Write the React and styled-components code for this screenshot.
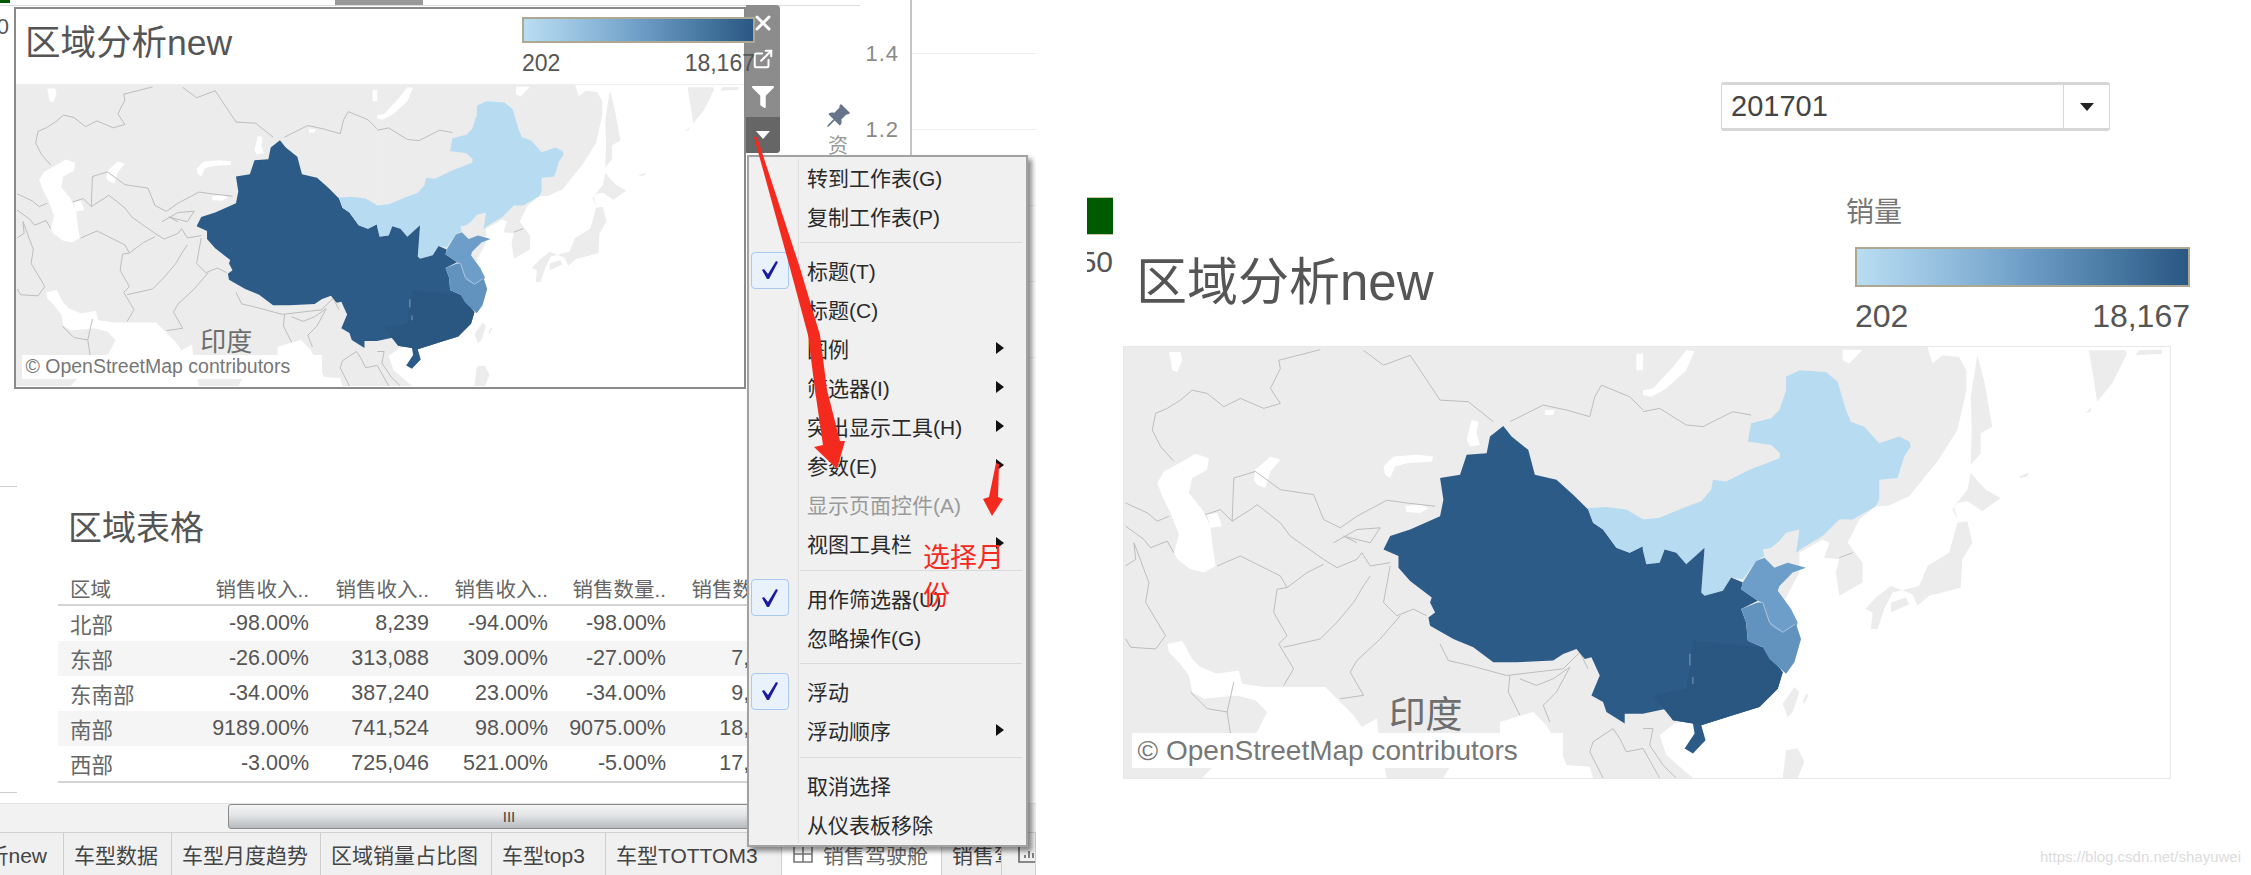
import React from "react";
import styled, { createGlobalStyle } from "styled-components";
import { X, ExternalLink } from "lucide-react";
import { FaFilter } from "react-icons/fa";
import { BsPinAngleFill } from "react-icons/bs";

const FONT = `"Liberation Sans", "Noto Sans CJK SC", sans-serif`;

const GlobalStyle = createGlobalStyle`
  html, body {
    margin: 0;
    padding: 0;
    background: white;
    font-family: ${FONT};
  }
  * {
    box-sizing: border-box;
  }
`;

const Page = styled.div`
  display: flex;
  width: 2251px;
  height: 875px;
  overflow: hidden;
  background: white;
`;

/* ---------- left screenshot ---------- */

const LeftShot = styled.div`
  position: relative;
  display: flex;
  flex-direction: column;
  width: 1036px;
  height: 875px;
  flex: none;
  overflow: hidden;
`;

const Canvas = styled.div`
  display: flex;
  height: 803px;
  flex: none;
`;

const Dashboard = styled.div`
  display: flex;
  flex-direction: column;
  width: 860px;
  flex: none;
`;

const TopStrip = styled.div`
  display: flex;
  height: 6px;
  flex: none;
  border-bottom: 1px solid #dcdcdc;
`;

const GreenStub = styled.div`
  width: 10px;
  height: 3px;
  background: #005a00;
`;

const GrayStub = styled.div`
  width: 88px;
  height: 5px;
  margin-left: 325px;
  background: #999;
`;

const CutValue = styled.div`
  width: 9px;
  margin-top: 10px;
  height: 22px;
  line-height: 22px;
  font-size: 22px;
  color: #555;
  overflow: hidden;
  direction: rtl;
`;

const StubRule = styled.div`
  width: 17px;
  height: 1px;
  margin-top: ${props => props.$top}px;
  background: #ccc;
  flex: none;
`;

const TableTitle = styled.h2`
  margin: 24px 0 0 68px;
  font-size: 34px;
  line-height: 34px;
  font-weight: 400;
  color: #555;
`;

const Table = styled.div`
  width: 727px;
  margin: 26px 0 0 58px;
  border-bottom: 2px solid #d4d4d4;
`;

const Row = styled.div`
  display: grid;
  grid-template-columns: 130px 121px 120px 119px 118px 119px;
  align-items: center;
  height: 35px;
  font-size: 21.5px;
  color: #555;
  background: ${props => (props.$striped ? "#f5f5f5" : "white")};
`;

const HeadRow = styled(Row)`
  border-bottom: 2px solid #d4d4d4;
  font-size: 20.5px;
  color: #666;
`;

const RegionCell = styled.div`
  padding-left: 12px;
  color: #666;
`;

const NumCell = styled.div`
  text-align: right;
  white-space: nowrap;
`;

const ChartPane = styled.div`
  display: flex;
  flex: 1;
  height: 440px;
`;

const AxisGutter = styled.div`
  width: 50px;
  flex: none;
  display: flex;
  flex-direction: column;
  align-items: flex-end;
  padding: 39px 11px 0 0;
  color: #8a8a8a;
  font-size: 22px;
  letter-spacing: 1px;
`;

const Tick = styled.div`
  height: 76px;
  line-height: 30px;
  flex: none;
`;

const Plot = styled.div`
  flex: 1;
  border-left: 2px solid #c4c4c4;
  background-image: repeating-linear-gradient(
    to bottom,
    transparent 0,
    transparent 75px,
    #efefef 75px,
    #efefef 76px
  );
  background-position: 0 -22px;
`;

const ScrollStrip = styled.div`
  display: flex;
  align-items: flex-start;
  height: 29px;
  flex: none;
  padding-left: 228px;
  background: #f2f2f2;
  border-top: 1px solid #e4e4e4;
`;

const ScrollThumb = styled.div`
  display: flex;
  align-items: center;
  justify-content: center;
  width: 740px;
  height: 25px;
  padding-right: 178px;
  border: 1px solid #8a8a8a;
  border-radius: 3px;
  background: linear-gradient(to bottom, #f4f4f4 0%, #e2e4e6 45%, #b6babe 100%);
  color: #444;
  font-size: 15px;
  letter-spacing: 0;
`;

const TabBar = styled.div`
  display: flex;
  height: 43px;
  flex: none;
  background: #f0f0f0;
  border-top: 1px solid #d0d0d0;
  overflow: hidden;
`;

const Tab = styled.div`
  display: flex;
  align-items: center;
  justify-content: ${props => (props.$end ? "flex-end" : "flex-start")};
  gap: 10px;
  width: ${props => props.$w}px;
  flex: none;
  padding: 0 ${props => (props.$end ? 16 : 0)}px 0 ${props => props.$pad ?? 10}px;
  border-right: 1px solid #cfcfcf;
  background: ${props => (props.$active ? "white" : "#f0f0f0")};
  color: ${props => (props.$active ? "#666" : "#444")};
  font-size: 21px;
  white-space: nowrap;
  overflow: hidden;
  svg {
    flex: none;
  }
`;

/* the selected map window floats over the dashboard */

const FloatCard = styled.div`
  position: absolute;
  left: 14px;
  top: 7px;
  z-index: 3;
  display: flex;
  flex-direction: column;
  width: 732px;
  height: 382px;
  border: 2px solid #8a8a8a;
  background: white;
`;

const CardHead = styled.div`
  display: flex;
  justify-content: space-between;
  height: 76px;
  flex: none;
  padding: 13px 0 0 9px;
  border-bottom: 1px solid #eee;
`;

const MapTitle = styled.h1`
  margin: 0;
  font-size: ${props => props.$size}px;
  line-height: 1.2;
  font-weight: 400;
  color: #555;
  white-space: nowrap;
`;

const Legend = styled.div`
  display: flex;
  flex-direction: column;
  width: ${props => props.$w}px;
  flex: none;
  color: #555;
  font-size: ${props => props.$size}px;
`;

const LegendBar = styled.div`
  height: ${props => props.$h}px;
  flex: none;
  border: 2px solid #aca892;
  background: linear-gradient(to right, #b9ddf2 0%, #9dc6e3 20%, #6f9fc8 50%, #44759f 80%, #2a5783 100%);
`;

const LegendRange = styled.div`
  display: flex;
  justify-content: space-between;
  margin-top: ${props => props.$gap}px;
  line-height: 1;
`;

const FloatLegend = styled(Legend)`
  margin: -5px -11px 0 0;
`;

const MapFrame = styled.div`
  position: relative;
  width: ${props => props.$w}px;
  height: ${props => props.$h}px;
  flex: none;
  overflow: hidden;
  background: white;
  svg {
    display: block;
    width: 100%;
    height: 100%;
    filter: blur(0.5px);
  }
`;

const CountryLabel = styled.div`
  position: absolute;
  left: 25.3%;
  top: 81.2%;
  font-size: ${props => props.$size}px;
  line-height: 1;
  color: #6e6e6e;
  white-space: nowrap;
`;

const Attribution = styled.div`
  position: absolute;
  left: 0.8%;
  top: 89.6%;
  width: 41.2%;
  height: 8.1%;
  display: flex;
  align-items: center;
  padding-left: 0.5%;
  background: white;
  font-size: ${props => props.$size}px;
  color: #777;
  white-space: nowrap;
`;

const Toolbar = styled.div`
  position: absolute;
  left: 746px;
  top: 5px;
  z-index: 2;
  display: flex;
  flex-direction: column;
  width: 34px;
  height: 148px;
  border-radius: 0 4px 4px 0;
  overflow: hidden;
  background: #8c8c8c;
  color: white;
`;

const ToolButton = styled.div`
  display: flex;
  align-items: center;
  justify-content: center;
  height: ${props => props.$h}px;
  flex: none;
  background: ${props => (props.$active ? "#666" : "transparent")};
`;

const CaretDown = styled.div`
  width: 0;
  height: 0;
  border-left: 7px solid transparent;
  border-right: 7px solid transparent;
  border-top: 8px solid ${props => props.$color};
`;

const PinOverlay = styled.div`
  position: absolute;
  left: 822px;
  top: 103px;
  z-index: 1;
  width: 32px;
  text-align: center;
  color: #66758a;
  font-size: 26px;
  line-height: 28px;
`;

const PinCaption = styled.div`
  font-size: 20px;
  line-height: 24px;
  color: #999;
`;

const Menu = styled.div`
  position: absolute;
  left: 747px;
  top: 155px;
  z-index: 4;
  width: 281px;
  height: 692px;
  border: 2px solid #a2a2a2;
  background: #f0f0f0;
  box-shadow: 4px 4px 5px rgba(0, 0, 0, 0.45);
  &::before {
    content: "";
    position: absolute;
    left: 49px;
    top: 2px;
    bottom: 2px;
    width: 1px;
    background: #dedede;
  }
`;

const MenuItem = styled.div`
  display: flex;
  align-items: center;
  height: 39px;
  padding-right: 22px;
  font-size: 21px;
  color: ${props => (props.$disabled ? "#9a9a9a" : "#2a2a2a")};
`;

const CheckSlot = styled.div`
  display: flex;
  align-items: center;
  width: 58px;
  padding-left: 2px;
  flex: none;
`;

const CheckBox = styled.div`
  display: flex;
  align-items: center;
  justify-content: center;
  width: 38px;
  height: 37px;
  border: 1px solid #a9c9ef;
  border-radius: 4px;
  background: #e9f1fb;
`;

const SubArrow = styled.div`
  margin-left: auto;
  width: 0;
  height: 0;
  border-top: 6px solid transparent;
  border-bottom: 6px solid transparent;
  border-left: 8px solid #111;
`;

const MenuRule = styled.div`
  height: 15.5px;
  margin: 0 4px 0 51px;
  position: relative;
  &::after {
    content: "";
    position: absolute;
    left: 0;
    right: 0;
    top: 7px;
    height: 1px;
    background: #dadada;
  }
`;

const Annotation = styled.svg`
  position: absolute;
  left: 0;
  top: 0;
  z-index: 5;
  width: 1036px;
  height: 875px;
  pointer-events: none;
`;

const RedNote = styled.div`
  position: absolute;
  left: 923px;
  top: 539px;
  z-index: 6;
  width: 84px;
  font-size: 27px;
  line-height: 38px;
  color: #f42a1e;
`;

/* ---------- right screenshot ---------- */

const RightShot = styled.div`
  display: flex;
  flex-direction: column;
  flex: 1;
  height: 875px;
  padding-top: 82px;
`;

const Dropdown = styled.div`
  display: flex;
  align-items: center;
  width: 389px;
  height: 49px;
  flex: none;
  margin-left: 685px;
  padding-left: 9px;
  border: 1px solid #d6d6d6;
  border-top-width: 3px;
  border-bottom-width: 3px;
  border-radius: 3px;
  font-size: 29px;
  color: #444;
`;

const DropValue = styled.div`
  flex: 1;
`;

const DropButton = styled.div`
  display: flex;
  align-items: center;
  justify-content: center;
  width: 46px;
  height: 100%;
  border-left: 1px solid #d6d6d6;
`;

const MapHead = styled.div`
  display: flex;
  height: 149px;
  flex: none;
  margin-top: 66px;
  padding: 0 61px 0 51px;
`;

const ColorKey = styled.div`
  display: flex;
  flex-direction: column;
  width: 26px;
  flex: none;
`;

const GreenSwatch = styled.div`
  height: 38px;
  flex: none;
  background: #005a00;
  border: solid #c8c4a8;
  border-width: 1px 0;
`;

const KeyValue = styled.div`
  margin-top: 12px;
  font-size: 30px;
  line-height: 30px;
  color: #555;
  overflow: hidden;
  direction: rtl;
`;

const RightTitle = styled(MapTitle)`
  margin: 55px 0 0 23px;
`;

const RightLegend = styled(Legend)`
  margin-left: auto;
`;

const LegendName = styled.div`
  margin: 0 0 18px -9px;
  font-size: 28px;
  line-height: 32px;
  color: #777;
`;

const Watermark = styled.div`
  align-self: flex-end;
  margin: 69px 10px 0 0;
  font-size: 15px;
  line-height: 18px;
  color: #dcdcdc;
`;

/* ---------- map drawing, traced in 3144 x 1299 units ---------- */

const LAND = "#ececec";
const SEA = "white";

const WEST_SEA = [
  "135,15 170,15 175,40 160,75 145,70 140,40",
  "100,410 120,375 175,345 215,322 255,335 250,370 205,395 195,440 235,490 260,540 265,590 275,660 240,680 200,670 160,640 150,620 165,565 140,500 115,450",
  "250,505 280,500 295,540 260,545",
  "395,370 440,330 470,340 440,375 425,425 400,415 390,400",
  "780,360 810,330 880,325 930,330 925,345 850,350 815,360 800,395 785,385",
  "1030,280 1045,220 1065,225 1060,260 1070,295 1040,300",
  "845,480 890,475 915,485 890,500 850,497",
  "1265,190 1295,190 1290,205 1265,205",
  "130,895 175,885 205,940 230,965 280,985 345,975 355,1015 420,1025 605,1025 640,1060 690,1110 715,1145 760,1120 765,1170 790,1299 235,1299 330,1200 400,1160 430,1100 395,1065 340,1050 240,1060 205,1040 195,990 165,950 135,920",
  "1130,1130 1230,1100 1270,1140 1310,1210 1330,1260 1400,1265 1410,1299 960,1299 980,1265 1130,1170",
  "1540,20 1560,20 1560,70 1540,70",
];

const WEST_BORDERS = [
  "85,250 95,200 130,185 170,160 205,130 250,140 300,180 350,155 420,185 470,170 440,125 470,65 465,40 590,8",
  "720,10 780,55 860,25 950,160 1035,165 1110,225",
  "1160,225 1260,175 1330,190 1400,210 1415,150 1435,115 1520,150 1560,190",
  "85,250 110,300 150,345",
  "325,525 330,395 395,375 470,430 570,445 600,520 650,545 700,510 790,462 850,470 935,480",
  "245,505 290,490 325,525 380,490 400,475 470,530 500,570 600,640 640,665 700,640 715,620 740,660 800,650",
  "280,660 350,630 470,690 490,725 550,680 600,655",
  "490,725 460,730 450,800 490,870 465,895 510,970 480,1020",
  "5,660 35,640 30,590 75,710 65,770 125,870 95,910 20,905 5,880",
  "5,470 70,500 100,525 135,510",
  "5,540 60,580 80,605 130,585 150,620",
  "740,690 720,720 690,770 640,830 590,880 480,905",
  "830,810 770,880 700,945 680,980 720,1050 650,1060",
  "800,660 780,770 820,810 870,790 910,810",
  "630,590 700,550 770,545 740,590 660,570 700,590",
  "950,895 975,945 1040,960 1150,990 1320,970 1370,920 1395,970",
  "1160,990 1155,1040 1190,1110",
  "1190,1000 1240,1020 1290,1000 1340,965 1300,1040 1260,1080 1280,1130",
  "1470,1150 1410,1190 1400,1220 1440,1299",
  "1470,1150 1490,1180 1510,1220 1560,1210",
  "200,1040 250,1090 310,1100 330,1010",
  "310,1100 320,1165",
];

const DARK_WEST =
  "1140,238 1165,270 1215,310 1235,385 1300,400 1350,445 1395,490 1410,530 1440,550 1480,605 1520,620 1561,600 1561,1105 1505,1105 1505,1135 1450,1100 1440,1070 1405,1050 1430,990 1405,935 1385,940 1360,910 1320,925 1290,945 1180,950 1110,950 1050,905 990,880 920,840 915,815 935,800 920,770 925,755 860,705 825,665 825,630 780,610 800,570 860,550 950,510 960,460 950,395 1010,385 1030,325 1090,320 1100,270";

const LIGHT_WEST =
  "1395,485 1450,482 1510,490 1561,520 1561,600 1520,620 1480,605 1440,550 1410,530";

const EAST_LAND =
  "0,0 855,0 870,50 900,25 950,30 972,70 972,130 945,250 885,345 800,450 740,478 700,480 650,520 615,590 660,650 660,710 590,750 580,680 590,640 545,635 560,590 540,580 470,620 470,680 300,1000 160,1120 95,1135 50,1170 70,1230 150,1299 0,1299";

const EAST_ISLANDS = [
  "985,380 1030,430 1075,455 1020,495 975,465 945,470 930,490 945,520 935,480 975,430",
  "945,530 975,525 990,590 960,640 955,725 900,740 860,750 825,780 810,745 745,720 700,755 668,790 690,800 685,850 705,850 725,790 750,740 830,720 855,660 920,620",
  "745,770 790,755 800,775 745,800",
  "1005,25 1025,100 1050,240 1015,260 1015,320 985,355 988,250 985,150",
  "455,1025 470,1040 450,1100 435,1115 420,1075",
  "490,1045 497,1050 485,1075 480,1070",
  "430,1215 465,1210 485,1250 465,1299 420,1299",
  "1130,390 1160,378 1155,390 1135,395",
  "1330,200 1350,180 1345,195",
  "1340,10 1450,10 1455,20 1410,110 1365,165 1355,100",
  "1490,10 1560,8 1560,20 1480,25",
];

const EAST_SEA = [
  "0,130 30,125 90,60 130,10 155,12 130,70 70,125 25,150 0,145",
  "600,8 660,8 620,50 600,40",
];

const LIGHT_EAST =
  "-1,520 50,515 120,485 175,465 205,430 210,400 250,405 320,370 410,335 412,320 385,295 315,285 325,230 385,215 410,190 430,130 430,90 470,70 550,75 585,105 610,190 625,225 665,240 710,290 770,270 800,285 805,300 785,330 765,395 710,400 710,460 700,480 630,520 590,520 540,570 480,605 460,620 470,550 430,560 410,585 385,605 360,610 365,630 340,645 300,700 265,695 240,735 185,750 175,740 185,605 130,655 100,620 65,610 50,650 10,655 -1,610";

const DARK_EAST =
  "-1,610 10,655 50,650 65,610 100,620 130,655 185,605 175,740 185,750 240,735 265,695 300,710 295,730 345,765 295,790 310,830 315,885 360,905 420,980 405,1030 350,1085 270,1110 175,1140 188,1185 150,1225 125,1210 155,1165 150,1135 90,1125 70,1090 -1,1105";

const SOUTH_EAST =
  "150,885 360,905 420,980 405,1030 350,1085 270,1110 175,1140 150,1135 90,1125 30,1050 130,1030 145,950";

const SHANDONG =
  "300,710 340,645 365,635 395,665 435,650 490,665 450,680 410,720 405,735 445,790 465,830 455,855 420,860 385,840 360,770 345,765 295,730";

const JIANGSU =
  "295,790 345,770 360,770 385,840 420,860 460,835 475,880 455,950 430,985 380,940 360,905 315,885 310,830";

const Border = ({ points }) => (
  <polyline
    points={points}
    fill="none"
    stroke="#bdbdbd"
    strokeWidth="1"
    vectorEffect="non-scaling-stroke"
  />
);

const MapArt = () => (
  <svg viewBox="0 0 3144 1299" preserveAspectRatio="none">
    <rect x="0" y="0" width="1561" height="1299" fill={LAND} />
    {WEST_SEA.map(p => (
      <polygon key={p} points={p} fill={SEA} />
    ))}
    {WEST_BORDERS.map(p => (
      <Border key={p} points={p} />
    ))}
    <polygon points={DARK_WEST} fill="#2d5b88" />
    <polygon points={LIGHT_WEST} fill="#b7dcf1" />
    <g transform="translate(1560 0)">
      <polygon points={EAST_LAND} fill={LAND} />
      {EAST_SEA.map(p => (
        <polygon key={p} points={p} fill={SEA} />
      ))}
      {EAST_ISLANDS.map(p => (
        <polygon key={p} points={p} fill={LAND} />
      ))}
      <Border points="0,195 50,185 130,235 180,240 270,195 325,205" />
      <Border points="0,1150 30,1150 20,1200 60,1260 100,1299" />
      <Border points="0,1210 50,1299" />
      <Border points="590,635 630,620" />
      <polygon points={LIGHT_EAST} fill="#b7dcf1" />
      <polygon points={DARK_EAST} fill="#2d5b88" />
      <polygon points={SOUTH_EAST} fill="#2a5781" />
      <polygon points={SHANDONG} fill="#6d9ec9" />
      <polygon points={JIANGSU} fill="#6293bf" />
      <polyline
        points="360,770 380,830 420,860 458,835"
        fill="none"
        stroke="#a6c4df"
        strokeWidth="1"
        vectorEffect="non-scaling-stroke"
      />
      <polyline
        points="141,925 141,960"
        fill="none"
        stroke="#7f9fbf"
        strokeWidth="1"
        vectorEffect="non-scaling-stroke"
      />
      <polyline
        points="150,995 150,1015"
        fill="none"
        stroke="#7f9fbf"
        strokeWidth="1"
        vectorEffect="non-scaling-stroke"
      />
    </g>
  </svg>
);

const RegionMap = ({ width, height, labelSize, creditSize, className }) => (
  <MapFrame className={className} $w={width} $h={height}>
    <MapArt />
    <CountryLabel $size={labelSize}>印度</CountryLabel>
    <Attribution $size={creditSize}>© OpenStreetMap contributors</Attribution>
  </MapFrame>
);

const RightMap = styled(RegionMap)`
  margin-left: 87px;
  border: 1px solid #e8e8e8;
`;

/* ---------- data ---------- */

const HEADERS = ["销售收入..", "销售收入..", "销售收入..", "销售数量..", "销售数量.."];

const ROWS = [
  ["北部", "-98.00%", "8,239", "-94.00%", "-98.00%", "202"],
  ["东部", "-26.00%", "313,088", "309.00%", "-27.00%", "7,342"],
  ["东南部", "-34.00%", "387,240", "23.00%", "-34.00%", "9,184"],
  ["南部", "9189.00%", "741,524", "98.00%", "9075.00%", "18,167"],
  ["西部", "-3.00%", "725,046", "521.00%", "-5.00%", "17,021"],
];

const MENU = [
  [
    { label: "转到工作表(G)" },
    { label: "复制工作表(P)" },
  ],
  [
    { label: "标题(T)", checked: true },
    { label: "标题(C)" },
    { label: "图例", sub: true },
    { label: "筛选器(I)", sub: true },
    { label: "突出显示工具(H)", sub: true },
    { label: "参数(E)", sub: true },
    { label: "显示页面控件(A)", disabled: true },
    { label: "视图工具栏", sub: true },
  ],
  [
    { label: "用作筛选器(U)", checked: true },
    { label: "忽略操作(G)" },
  ],
  [
    { label: "浮动", checked: true },
    { label: "浮动顺序", sub: true },
  ],
  [
    { label: "取消选择" },
    { label: "从仪表板移除" },
  ],
];

const TABS = [
  { text: "分析new", w: 64, end: true, pad: 0 },
  { text: "车型数据", w: 108 },
  { text: "车型月度趋势", w: 149 },
  { text: "区域销量占比图", w: 171 },
  { text: "车型top3", w: 114 },
  { text: "车型TOTTOM3", w: 176 },
];

const CheckMark = () => (
  <svg width="18" height="20" viewBox="0 0 18 20">
    <polygon points="1,10 3,9 7,14 15,1 17,2 8,19 6,19" fill="#1b1b9e" />
  </svg>
);

const DashIcon = () => (
  <svg width="20" height="20" viewBox="0 0 20 20" fill="none" stroke="#777" strokeWidth="1.6">
    <path d="M1 3v15h18V3M1 10h18M10 3v15" />
  </svg>
);

const ChartIcon = () => (
  <svg width="22" height="22" viewBox="0 0 22 22" fill="none" stroke="#666" strokeWidth="1.6">
    <path d="M1 2v17h20M7 15v-3M11 15V8M15 15v-5M19 15V5" />
  </svg>
);

const App = () => (
  <Page>
    <GlobalStyle />
    <LeftShot>
      <Canvas>
        <Dashboard>
          <TopStrip>
            <GreenStub />
            <GrayStub />
          </TopStrip>
          <CutValue>50</CutValue>
          <StubRule $top={448} />
          <TableTitle>区域表格</TableTitle>
          <Table>
            <HeadRow>
              <RegionCell>区域</RegionCell>
              {HEADERS.map((h, i) => (
                <NumCell key={i}>{h}</NumCell>
              ))}
            </HeadRow>
            {ROWS.map((row, i) => (
              <Row key={row[0]} $striped={i % 2 === 1}>
                <RegionCell>{row[0]}</RegionCell>
                {row.slice(1).map((v, j) => (
                  <NumCell key={j}>{v}</NumCell>
                ))}
              </Row>
            ))}
          </Table>
          <StubRule $top={9} />
        </Dashboard>
        <ChartPane>
          <AxisGutter>
            <Tick>1.4</Tick>
            <Tick>1.2</Tick>
          </AxisGutter>
          <Plot />
        </ChartPane>
      </Canvas>
      <ScrollStrip>
        <ScrollThumb>III</ScrollThumb>
      </ScrollStrip>
      <TabBar>
        {TABS.map(tab => (
          <Tab key={tab.text} $w={tab.w} $end={tab.end} $pad={tab.pad}>
            {tab.text}
          </Tab>
        ))}
        <Tab $w={160} $active $pad={11}>
          <DashIcon />
          销售驾驶舱
        </Tab>
        <Tab $w={60} $pad={10}>
          销售驾驶舱
        </Tab>
        <Tab $w={34} $pad={16}>
          <ChartIcon />
        </Tab>
      </TabBar>

      <FloatCard>
        <CardHead>
          <MapTitle $size={35.5}>区域分析new</MapTitle>
          <FloatLegend $w={233} $size={23}>
            <LegendBar $h={26} />
            <LegendRange $gap={9}>
              <span>202</span>
              <span>18,167</span>
            </LegendRange>
          </FloatLegend>
        </CardHead>
        <RegionMap width={728} height={301} labelSize={26} creditSize={19.5} />
      </FloatCard>

      <Toolbar>
        <ToolButton $h={36}>
          <X size={24} strokeWidth={3} />
        </ToolButton>
        <ToolButton $h={35}>
          <ExternalLink size={22} strokeWidth={2.2} />
        </ToolButton>
        <ToolButton $h={41}>
          <FaFilter size={22} />
        </ToolButton>
        <ToolButton $h={36} $active>
          <CaretDown $color="white" />
        </ToolButton>
      </Toolbar>

      <PinOverlay>
        <BsPinAngleFill />
        <PinCaption>资</PinCaption>
      </PinOverlay>

      <Menu>
        {MENU.map((group, g) => (
          <React.Fragment key={g}>
            {g > 0 && <MenuRule />}
            {group.map(item => (
              <MenuItem key={item.label} $disabled={item.disabled}>
                <CheckSlot>
                  {item.checked && (
                    <CheckBox>
                      <CheckMark />
                    </CheckBox>
                  )}
                </CheckSlot>
                {item.label}
                {item.sub && <SubArrow />}
              </MenuItem>
            ))}
          </React.Fragment>
        ))}
      </Menu>

      <Annotation viewBox="0 0 1036 875">
        <polygon
          points="754,137 757,137 800,268 820,335 827,390 840,441 845,441 837,469 814,447 823,445 815,390 808,335 790,268"
          fill="#f42a1e"
        />
        <polygon
          points="996,463 999,464 998,497 1003,499 992,516 983,499 989,497"
          fill="#f42a1e"
        />
      </Annotation>
      <RedNote>选择月份</RedNote>
    </LeftShot>

    <RightShot>
      <Dropdown>
        <DropValue>201701</DropValue>
        <DropButton>
          <CaretDown $color="#222" />
        </DropButton>
      </Dropdown>
      <MapHead>
        <ColorKey>
          <GreenSwatch />
          <KeyValue>50</KeyValue>
        </ColorKey>
        <RightTitle $size={51}>区域分析new</RightTitle>
        <RightLegend $w={335} $size={32}>
          <LegendName>销量</LegendName>
          <LegendBar $h={40} />
          <LegendRange $gap={13}>
            <span>202</span>
            <span>18,167</span>
          </LegendRange>
        </RightLegend>
      </MapHead>
      <RightMap width={1048} height={433} labelSize={37} creditSize={28} />
      <Watermark>https://blog.csdn.net/shayuwei</Watermark>
    </RightShot>
  </Page>
);

export default App;
